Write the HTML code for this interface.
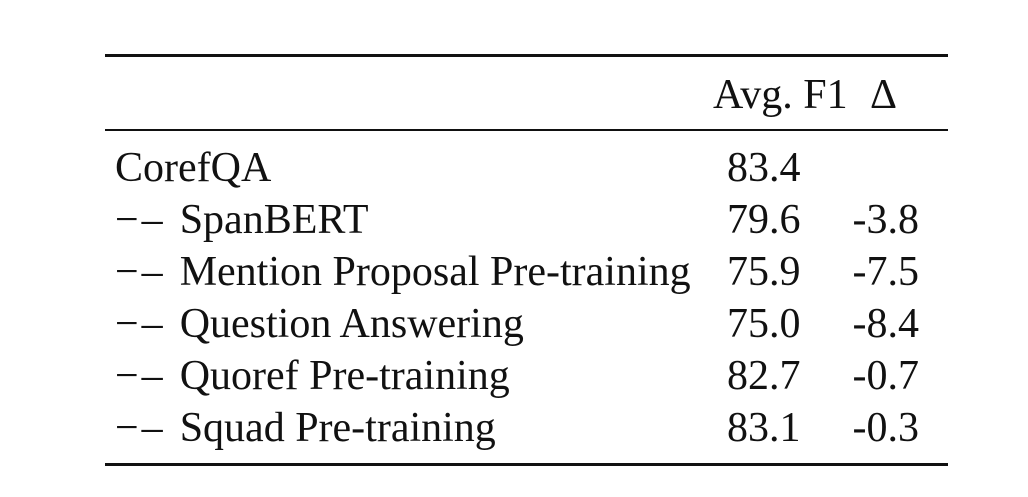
<!DOCTYPE html>
<html><head><style>
html,body{margin:0;padding:0;background:#fff;width:1028px;height:497px;overflow:hidden}
body{position:relative;font-family:"Liberation Serif",serif;color:#111;font-size:42px}
.l{position:absolute;left:105px;width:843px;background:#111}
.t{position:absolute;white-space:nowrap;line-height:1}
.r{position:absolute;white-space:nowrap;line-height:1;text-align:right;width:100px}
.d{letter-spacing:3px;margin-right:14px}
</style></head><body>
<div class="l" style="top:54px;height:3px"></div>
<div class="l" style="top:129px;height:2px"></div>
<div class="l" style="top:463px;height:3px"></div>

<div class="t" style="left:713px;top:74px">Avg. F1</div>
<div class="t" style="left:870px;top:74px">Δ</div>

<div class="t" style="left:115px;top:147px">CorefQA</div>
<div class="t" style="left:115px;top:199px"><span class="d">−–</span>SpanBERT</div>
<div class="t" style="left:115px;top:251px"><span class="d">−–</span>Mention Proposal Pre-training</div>
<div class="t" style="left:115px;top:303px"><span class="d">−–</span>Question Answering</div>
<div class="t" style="left:115px;top:355px"><span class="d">−–</span>Quoref Pre-training</div>
<div class="t" style="left:115px;top:407px"><span class="d">−–</span>Squad Pre-training</div>

<div class="t" style="left:727px;top:147px">83.4</div>
<div class="t" style="left:727px;top:199px">79.6</div>
<div class="t" style="left:727px;top:251px">75.9</div>
<div class="t" style="left:727px;top:303px">75.0</div>
<div class="t" style="left:727px;top:355px">82.7</div>
<div class="t" style="left:727px;top:407px">83.1</div>

<div class="r" style="left:819px;top:199px">-3.8</div>
<div class="r" style="left:819px;top:251px">-7.5</div>
<div class="r" style="left:819px;top:303px">-8.4</div>
<div class="r" style="left:819px;top:355px">-0.7</div>
<div class="r" style="left:819px;top:407px">-0.3</div>
</body></html>
